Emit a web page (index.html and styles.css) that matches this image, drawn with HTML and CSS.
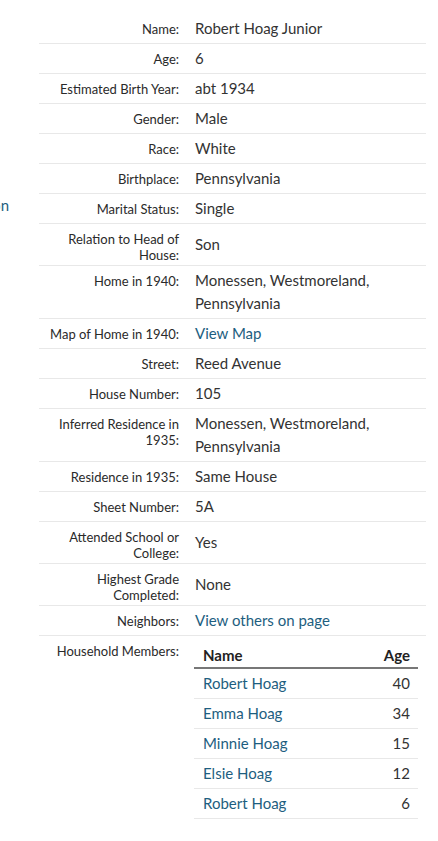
FILE: index.html
```html
<!DOCTYPE html>
<html>
<head>
<meta charset="utf-8">
<link rel="stylesheet" href="styles.css">
</head>
<body>
<div class="page">
  <aside class="side"><div class="side-clip"><a class="link">Collection</a></div></aside>
  <table class="rec">
    <tr><th>Name:</th><td>Robert Hoag Junior</td></tr>
    <tr><th>Age:</th><td>6</td></tr>
    <tr><th>Estimated Birth Year:</th><td>abt 1934</td></tr>
    <tr><th>Gender:</th><td>Male</td></tr>
    <tr><th>Race:</th><td>White</td></tr>
    <tr><th>Birthplace:</th><td>Pennsylvania</td></tr>
    <tr><th>Marital Status:</th><td>Single</td></tr>
    <tr><th>Relation to Head of House:</th><td>Son</td></tr>
    <tr><th>Home in 1940:</th><td>Monessen, Westmoreland, Pennsylvania</td></tr>
    <tr><th>Map of Home in 1940:</th><td><a class="link">View Map</a></td></tr>
    <tr><th>Street:</th><td>Reed Avenue</td></tr>
    <tr><th>House Number:</th><td>105</td></tr>
    <tr><th>Inferred Residence in 1935:</th><td>Monessen, Westmoreland, Pennsylvania</td></tr>
    <tr><th>Residence in 1935:</th><td>Same House</td></tr>
    <tr><th>Sheet Number:</th><td>5A</td></tr>
    <tr><th>Attended School or College:</th><td>Yes</td></tr>
    <tr><th>Highest Grade Completed:</th><td>None</td></tr>
    <tr><th>Neighbors:</th><td><a class="link">View others on page</a></td></tr>
    <tr class="last"><th>Household Members:</th><td class="hh-cell">
      <table class="hh">
        <thead><tr><th class="hh-name">Name</th><th class="hh-age">Age</th></tr></thead>
        <tbody>
          <tr><td><a class="link">Robert Hoag</a></td><td class="num">40</td></tr>
          <tr><td><a class="link">Emma Hoag</a></td><td class="num">34</td></tr>
          <tr><td><a class="link">Minnie Hoag</a></td><td class="num">15</td></tr>
          <tr><td><a class="link">Elsie Hoag</a></td><td class="num">12</td></tr>
          <tr><td><a class="link">Robert Hoag</a></td><td class="num">6</td></tr>
        </tbody>
      </table>
    </td></tr>
  </table>
</div>
</body>
</html>
```

FILE: styles.css
```css
html, body {
  margin: 0;
  padding: 0;
  background: #fff;
}
body {
  font-family: Lato, "Open Sans", sans-serif;
  color: #333;
}
.page {
  display: flex;
  align-items: flex-start;
  padding-top: 14px;
}
.side {
  width: 39px;
  flex: none;
}
.side-clip {
  width: 9px;
  overflow: hidden;
  display: flex;
  justify-content: flex-end;
  white-space: nowrap;
  margin-top: 181px;
  font-size: 15px;
  line-height: 20px;
}
.link {
  color: #1d5e80;
  text-decoration: none;
}
.rec {
  width: 387px;
  border-collapse: separate;
  border-spacing: 0;
}
.rec > tbody > tr > th,
.rec > tr > th {
  width: 140px;
  text-align: right;
  vertical-align: top;
  font-weight: normal;
  font-size: 13px;
  line-height: 16px;
  padding: 7px 8px 2px 0;
  color: #2a2a2a;
}
.rec > tbody > tr > td,
.rec > tr > td {
  vertical-align: middle;
  font-size: 15px;
  line-height: 23px;
  padding: 3px 8px 3px 8px;
}
.rec > tbody > tr + tr > th,
.rec > tbody > tr + tr > td {
  border-top: 1px solid #e8e8e8;
}
.rec > tbody > tr > td.hh-cell {
  vertical-align: top;
  padding: 2px 8px 0 7px;
}
.hh {
  width: 100%;
  border-collapse: separate;
  border-spacing: 0;
}
.hh th {
  font-weight: bold;
  font-size: 15px;
  line-height: 20px;
  padding: 7px 8px 2px 9px;
  border-bottom: 2px solid #777;
  color: #222;
}
.hh .hh-name { text-align: left; }
.hh .hh-age { text-align: right; }
.hh td {
  font-size: 15px;
  line-height: 23px;
  padding: 3px 8px 3px 9px;
  border-bottom: 1px solid #e8e8e8;
}
.hh td.num {
  text-align: right;
}
```
